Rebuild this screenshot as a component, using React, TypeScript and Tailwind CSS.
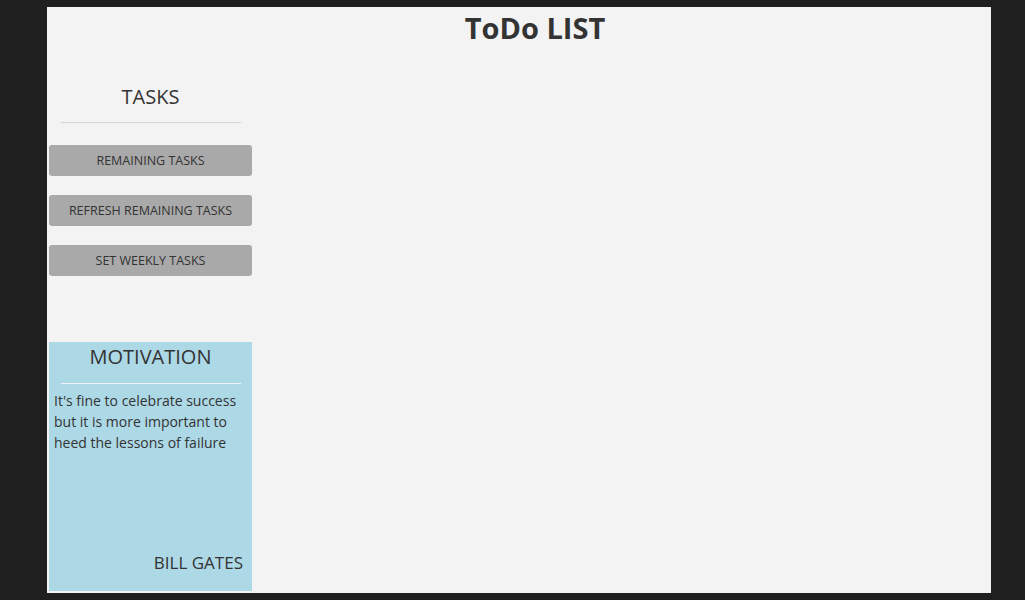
import React from 'react';

const tasks = ['REMAINING TASKS', 'REFRESH REMAINING TASKS', 'SET WEEKLY TASKS'];

const App = () => {
  return (
    <div
      className="w-full h-[600px] bg-[#1f1f1f] pt-[7px] pl-[47px] text-[#333]"
      style={{ fontFamily: '"Open Sans", "Noto Sans", sans-serif' }}
    >
      <div className="w-[944px] h-[586px] bg-[#f3f3f3] flex flex-col">
        {/* Header */}
        <h1 className="h-[40px] pl-[32px] text-center text-[29px] font-bold leading-[42px]">
          ToDo LIST
        </h1>

        <div className="flex flex-1">
          {/* Sidebar */}
          <aside className="ml-[2px] w-[203px] flex flex-col">
            <h2 className="mt-[36px] text-center text-[20px] leading-[28px]">TASKS</h2>
            <hr className="mx-auto mt-[11px] w-[180px] border-t border-[#d3d3d3]" />

            <div className="mt-[22px] flex flex-col gap-[19px]">
              {tasks.map((t) => (
                <button
                  key={t}
                  className="h-[31px] w-full rounded-[3px] bg-[#a9a9a9] pt-[2px] text-[12.5px] text-[#333]"
                >
                  {t}
                </button>
              ))}
            </div>

            {/* Motivation */}
            <div className="mt-[66px] h-[249px] bg-[#add8e6] flex flex-col">
              <h3 className="pt-[1px] text-center text-[20px] leading-[28px]">MOTIVATION</h3>
              <hr className="mx-auto mt-[12px] w-[180px] border-t border-[#eef4f6]" />
              <p className="mt-[6px] pl-[5px] text-[14px] leading-[21px] whitespace-nowrap">
                It's fine to celebrate success
                <br />
                but it is more important to
                <br />
                heed the lessons of failure
              </p>
              <p className="mt-auto mb-[16px] pr-[9px] text-right text-[17px] leading-[24px]">
                BILL GATES
              </p>
            </div>
          </aside>
        </div>
      </div>
    </div>
  );
};

export default App;
